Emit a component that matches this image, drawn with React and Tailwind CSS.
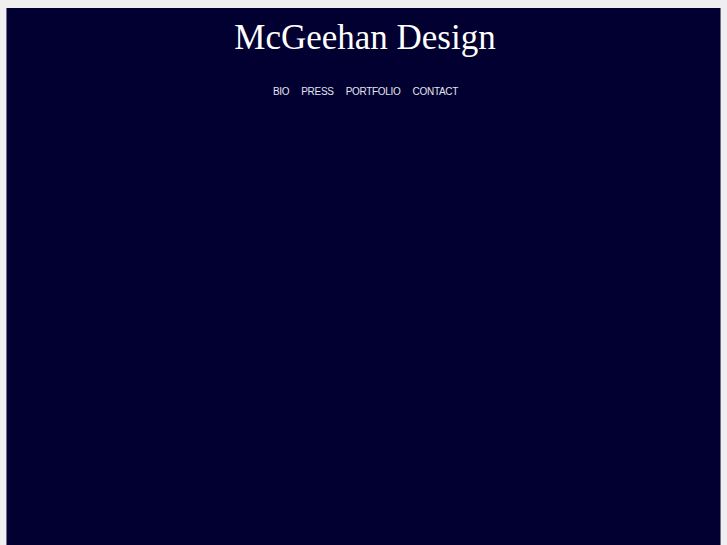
export default function App() {
    const links = ['BIO', 'PRESS', 'PORTFOLIO', 'CONTACT'];

    return (
        <div className="min-h-screen bg-[#efefef] pt-2 px-[6px]">
            <div className="min-h-[537px] bg-[#010030] border-x border-[#6d6d8c] pt-[11px]">
                <h1 className="text-center text-white text-[35px] leading-[38px] font-normal font-['Liberation_Serif',serif] pl-[3px]">
                    McGeehan Design
                </h1>
                <nav className="mt-[29px] flex justify-center gap-[12px] pl-[4px]">
                    {links.map(l => (
                        <a
                            key={l}
                            href="#"
                            className="text-[10px] leading-[12px] tracking-[-0.3px] text-[#e4e4f0] font-['Liberation_Sans',sans-serif]"
                        >
                            {l}
                        </a>
                    ))}
                </nav>
            </div>
        </div>
    );
}
